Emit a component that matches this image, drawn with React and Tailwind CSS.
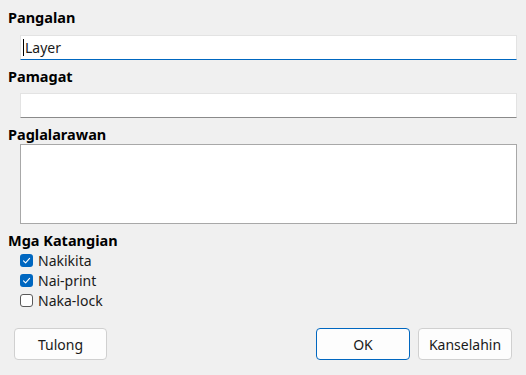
import { useState } from 'react'

function Check({ checked, label, onChange }) {
  return (
    <label className="flex items-center h-5 pl-3 gap-[5px] cursor-default">
      <span
        onClick={onChange}
        className={`w-[13px] h-[13px] rounded-[3px] flex items-center justify-center ${
          checked ? 'bg-[#0067c0]' : 'bg-white border border-[#5a5a5a]'
        }`}
      >
        {checked && (
          <svg width="9" height="9" viewBox="0 0 9 9" fill="none">
            <path d="M1.5 4.8 L3.6 6.8 L7.6 2.4" stroke="white" strokeWidth="1.1" strokeLinecap="round" strokeLinejoin="round" />
          </svg>
        )}
      </span>
      <span className="text-[14px] text-[#1a1a1a]" onClick={onChange}>{label}</span>
    </label>
  )
}

export default function App() {
  const [flags, setFlags] = useState({ visible: true, print: true, lock: false })
  const toggle = (k) => setFlags((f) => ({ ...f, [k]: !f[k] }))

  return (
    <div className="w-[526px] h-[375px] bg-[#f0f0f0] flex flex-col pt-2 pr-[9px] pl-2 text-black" style={{ fontFamily: '"Noto Sans", sans-serif' }}>
      <div className="font-bold text-[14.5px] leading-[19px]">Pangalan</div>
      <div className="mt-2 ml-[12px] h-[25px] bg-white border border-[#e3e3e3] border-b-[#0067c0] flex items-center pl-[2px]">
        <span className="w-px h-[17px] bg-black mr-px"></span>
        <span className="text-[14px] text-[#1a1a1a]">Layer</span>
      </div>

      <div className="mt-[7px] font-bold text-[14.5px] leading-[19px]">Pamagat</div>
      <div className="mt-[7px] ml-[12px] h-[25px] bg-white border border-[#e3e3e3] border-b-[#8a8a8a]"></div>

      <div className="mt-[7px] font-bold text-[14.5px] leading-[19px]">Paglalarawan</div>
      <div className="ml-[12px] h-[80px] bg-white border border-[#a8a8a8]"></div>

      <div className="mt-[7px] font-bold text-[14.5px] leading-[19px]">Mga Katangian</div>
      <div className="flex flex-col">
        <Check checked={flags.visible} label="Nakikita" onChange={() => toggle('visible')} />
        <Check checked={flags.print} label="Nai-print" onChange={() => toggle('print')} />
        <Check checked={flags.lock} label="Naka-lock" onChange={() => toggle('lock')} />
      </div>

      <div className="mt-[18px] flex items-center pl-[6px] pr-[5px]">
        <button className="w-[93px] h-[32px] bg-[#fdfdfd] border border-[#d0d0d0] rounded-[4px] text-[14px] text-[#1a1a1a]">Tulong</button>
        <div className="flex-1"></div>
        <button className="w-[94px] h-[32px] bg-[#fdfdfd] border border-[#0067c0] rounded-[4px] text-[14px] text-[#1a1a1a]">OK</button>
        <button className="ml-2 w-[94px] h-[32px] bg-[#fdfdfd] border border-[#d0d0d0] rounded-[4px] text-[14px] text-[#1a1a1a]">Kanselahin</button>
      </div>
    </div>
  )
}
